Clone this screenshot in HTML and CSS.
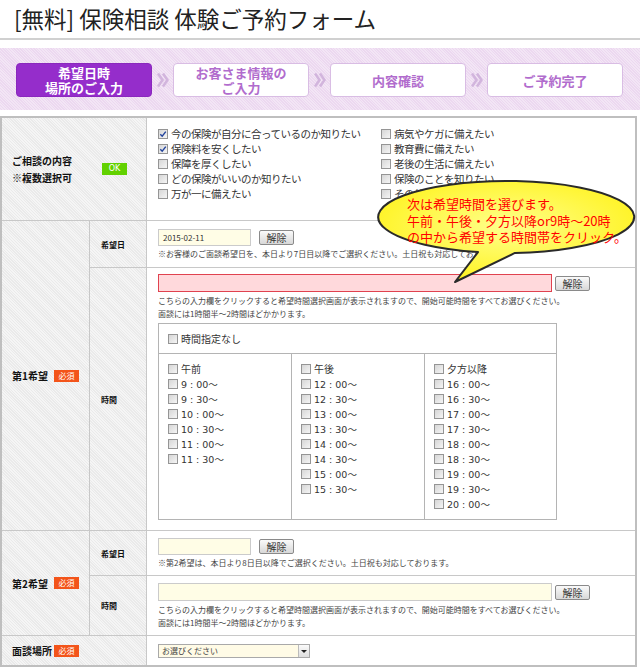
FILE: index.html
```html
<!DOCTYPE html>
<html lang="ja">
<head>
<meta charset="utf-8">
<title>保険相談 体験ご予約フォーム</title>
<link rel="stylesheet" href="styles.css">
</head>
<body>
<div class="page">
  <h1 class="title">[無料] 保険相談 体験ご予約フォーム</h1>

  <ol class="steps">
    <li class="step active">希望日時<br>場所のご入力</li>
    <li class="chev"><svg viewBox="0 0 12 16" width="12" height="16"><path d="M1 1.5 L5.5 8 L1 14.5 M6 1.5 L10.5 8 L6 14.5"/></svg></li>
    <li class="step">お客さま情報の<br>ご入力</li>
    <li class="chev"><svg viewBox="0 0 12 16" width="12" height="16"><path d="M1 1.5 L5.5 8 L1 14.5 M6 1.5 L10.5 8 L6 14.5"/></svg></li>
    <li class="step">内容確認</li>
    <li class="chev"><svg viewBox="0 0 12 16" width="12" height="16"><path d="M1 1.5 L5.5 8 L1 14.5 M6 1.5 L10.5 8 L6 14.5"/></svg></li>
    <li class="step">ご予約完了</li>
  </ol>

  <table class="form">
    <colgroup><col class="c1"><col class="c2"><col class="c3"></colgroup>
    <tbody>
      <tr class="r-consult">
        <th colspan="2" class="lab">
          <div class="lw"><span class="lt">ご相談の内容<br>※複数選択可</span><span class="badge ok">OK</span></div>
        </th>
        <td class="val v-consult">
          <div class="checks">
            <ul class="cl">
              <li><span class="cb"><svg viewBox="0 0 8 8"><path d="M1.3 4.2 L3.2 6.2 L6.8 1.6"/></svg></span>今の保険が自分に合っているのか知りたい</li>
              <li><span class="cb"><svg viewBox="0 0 8 8"><path d="M1.3 4.2 L3.2 6.2 L6.8 1.6"/></svg></span>保険料を安くしたい</li>
              <li><span class="cb"></span>保障を厚くしたい</li>
              <li><span class="cb"></span>どの保険がいいのか知りたい</li>
              <li><span class="cb"></span>万が一に備えたい</li>
            </ul>
            <ul class="cl">
              <li><span class="cb"></span>病気やケガに備えたい</li>
              <li><span class="cb"></span>教育費に備えたい</li>
              <li><span class="cb"></span>老後の生活に備えたい</li>
              <li><span class="cb"></span>保険のことを知りたい</li>
              <li><span class="cb"></span>その他</li>
            </ul>
          </div>
        </td>
      </tr>

      <tr class="r-d1">
        <th rowspan="2" class="lab">
          <div class="lw"><span class="lt">第1希望</span><span class="badge req">必須</span></div>
        </th>
        <th class="sub">希望日</th>
        <td class="val v-date">
          <div class="line"><span class="inp date">2015-02-11</span><span class="btn">解除</span></div>
          <p class="note">※お客様のご面談希望日を、本日より7日目以降でご選択ください。土日祝も対応しております。</p>
        </td>
      </tr>

      <tr class="r-t1">
        <th class="sub">時間</th>
        <td class="val v-time">
          <div class="line"><span class="inp time err"></span><span class="btn near">解除</span></div>
          <p class="note2">こちらの入力欄をクリックすると希望時間選択画面が表示されますので、開始可能時間をすべてお選びください。<br>面談には1時間半～2時間ほどかかります。</p>
          <div class="timebox">
            <div class="tb-top"><span class="cb"></span><span class="jp">時間指定なし</span></div>
            <div class="tb-cols">
              <ul class="tl">
                <li><span class="cb"></span><span class="jp">午前</span></li>
                <li><span class="cb"></span>9 : 00～</li>
                <li><span class="cb"></span>9 : 30～</li>
                <li><span class="cb"></span>10 : 00～</li>
                <li><span class="cb"></span>10 : 30～</li>
                <li><span class="cb"></span>11 : 00～</li>
                <li><span class="cb"></span>11 : 30～</li>
              </ul>
              <ul class="tl">
                <li><span class="cb"></span><span class="jp">午後</span></li>
                <li><span class="cb"></span>12 : 00～</li>
                <li><span class="cb"></span>12 : 30～</li>
                <li><span class="cb"></span>13 : 00～</li>
                <li><span class="cb"></span>13 : 30～</li>
                <li><span class="cb"></span>14 : 00～</li>
                <li><span class="cb"></span>14 : 30～</li>
                <li><span class="cb"></span>15 : 00～</li>
                <li><span class="cb"></span>15 : 30～</li>
              </ul>
              <ul class="tl">
                <li><span class="cb"></span><span class="jp">夕方以降</span></li>
                <li><span class="cb"></span>16 : 00～</li>
                <li><span class="cb"></span>16 : 30～</li>
                <li><span class="cb"></span>17 : 00～</li>
                <li><span class="cb"></span>17 : 30～</li>
                <li><span class="cb"></span>18 : 00～</li>
                <li><span class="cb"></span>18 : 30～</li>
                <li><span class="cb"></span>19 : 00～</li>
                <li><span class="cb"></span>19 : 30～</li>
                <li><span class="cb"></span>20 : 00～</li>
              </ul>
            </div>
          </div>
        </td>
      </tr>

      <tr class="r-d2">
        <th rowspan="2" class="lab">
          <div class="lw"><span class="lt">第2希望</span><span class="badge req">必須</span></div>
        </th>
        <th class="sub">希望日</th>
        <td class="val v-d2">
          <div class="line"><span class="inp date"></span><span class="btn">解除</span></div>
          <p class="note">※第2希望は、本日より8日目以降でご選択ください。土日祝も対応しております。</p>
        </td>
      </tr>

      <tr class="r-t2">
        <th class="sub">時間</th>
        <td class="val v-t2">
          <div class="line"><span class="inp time"></span><span class="btn near">解除</span></div>
          <p class="note2">こちらの入力欄をクリックすると希望時間選択画面が表示されますので、開始可能時間をすべてお選びください。<br>面談には1時間半～2時間ほどかかります。</p>
        </td>
      </tr>

      <tr class="r-place">
        <th colspan="2" class="lab">
          <div class="lw"><span class="lt">面談場所</span><span class="badge req">必須</span></div>
        </th>
        <td class="val v-place">
          <div class="sel"><span class="txt">お選びください</span><span class="arr"></span></div>
        </td>
      </tr>
    </tbody>
  </table>

  <div class="callout">
    <svg width="264" height="110" viewBox="0 0 264 110">
      <defs>
        <radialGradient id="yg" cx="50%" cy="45%" r="60%">
          <stop offset="0" stop-color="#ffff8c"/>
          <stop offset="1" stop-color="#fff21a"/>
        </radialGradient>
      </defs>
      <path d="M139 75.9 A128 36 0 1 0 102 75.1 L79 105 Z" fill="url(#yg)" stroke="#2a2a2a" stroke-width="2" stroke-linejoin="round"/>
    </svg>
    <p>次は希望時間を選びます。<br>午前・午後・夕方以降or9時～20時<br>の中から希望する時間帯をクリック。</p>
  </div>
</div>
</body>
</html>
```

FILE: styles.css
```css
* { box-sizing: border-box; }
html, body { margin: 0; padding: 0; background: #fff; }
body { font-family: "Noto Sans CJK JP", "Noto Sans", sans-serif; color: #333; }

.page { position: relative; width: 640px; height: 670px; overflow: hidden; }

.title {
  margin: 0;
  height: 40px;
  padding: 6px 0 0 14px;
  font-size: 22.5px;
  line-height: 24px;
  font-weight: 400;
  color: #222;
  border-bottom: 2px solid #d0d0d0;
  white-space: nowrap;
}

.steps {
  list-style: none;
  margin: 8px 0 0;
  padding: 15px 16px 0;
  height: 62px;
  display: flex;
  align-items: flex-start;
  background: #ecd8f0 repeating-linear-gradient(45deg, rgba(255,255,255,.35) 0 1px, transparent 1px 2px);
}
.step {
  width: 136px;
  height: 34px;
  display: flex;
  align-items: center;
  justify-content: center;
  text-align: center;
  font-size: 13px;
  line-height: 15px;
  font-weight: 700;
  color: #b16ccd;
  background: #fff;
  border: 1px solid #d9bde4;
  border-radius: 4px;
}
.step.active { background: #952dcb; border-color: #8a28bd; color: #fff; }
.chev { width: 21px; height: 34px; display: flex; align-items: center; justify-content: center; }
.chev svg { fill: none; stroke: #d2b5dd; stroke-width: 2.6; }

.form {
  margin-top: 6px;
  width: 637px;
  border: 2px solid #bfbfbf;
  border-collapse: separate;
  border-spacing: 0;
  table-layout: fixed;
}
.c1 { width: 88px; }
.c2 { width: 57px; }
.c3 { width: 488px; }

.form th, .form td {
  padding: 0;
  border-right: 1px solid #c8c8c8;
  border-bottom: 1px solid #c8c8c8;
  font-weight: 400;
  text-align: left;
}
.form td.val { border-right: 0; vertical-align: top; padding-left: 11px; }
.form .r-place > th, .form .r-place > td { border-bottom: 0; }

.form .lab, .form .sub {
  vertical-align: middle;
  background: #efefef repeating-linear-gradient(45deg, #f5f5f5 0 1px, #eaeaea 1px 2px);
}

.r-consult { height: 103px; }
.r-d1 { height: 47px; }
.r-t1 { height: 263px; }
.r-d2 { height: 45px; }
.r-t2 { height: 60px; }
.r-place { height: 29px; }

.form td.v-consult { padding-top: 8px; }
.form td.v-date { padding-top: 8px; }
.form td.v-time { padding-top: 6px; }
.form td.v-d2 { padding-top: 7px; }
.form td.v-t2 { padding-top: 7px; }
.form td.v-place { padding-top: 8px; }

.lw { display: flex; align-items: center; padding-left: 10px; }
.lt { font-size: 10px; font-weight: 700; color: #111; line-height: 17px; min-width: 42px; white-space: nowrap; }
.badge { display: inline-block; width: 25px; height: 12px; font-size: 8px; line-height: 12px; text-align: center; color: #fff; }
.req { background: #f3541a; }
.ok { background: #62d100; margin-left: 30px; font-family: "DejaVu Sans", sans-serif; font-size: 8px; }
.form th.sub { padding-left: 11px; font-size: 8px; font-weight: 700; color: #111; }

.checks { display: grid; grid-template-columns: 223px auto; }
.cl { list-style: none; margin: 0; padding: 0; }
.cl li { display: flex; align-items: center; height: 15px; font-size: 10.5px; letter-spacing: -0.5px; white-space: nowrap; color: #333; }

.cb {
  flex: none;
  width: 10px;
  height: 10px;
  margin-right: 3px;
  border: 1px solid #959595;
  background: linear-gradient(135deg, #d6d6d6, #f5f5f5);
  display: inline-flex;
  align-items: center;
  justify-content: center;
}
.cb svg { width: 8px; height: 8px; fill: none; stroke: #22439c; stroke-width: 1.4; }

.line { display: flex; align-items: center; }
.inp {
  display: block;
  height: 17px;
  border: 1px solid #cbcbcb;
  background: #fffde6;
  padding: 0 4px;
  font-size: 8px;
  line-height: 15px;
  color: #333;
}
.inp.date { width: 93px; }
.inp.time { width: 394px; height: 18px; }
.inp.err { background: #ffd9dc; border-color: #e0424f; }

.btn {
  display: inline-block;
  margin-left: 8px;
  width: 35px;
  height: 15px;
  border: 1px solid #8a8a8a;
  border-radius: 2px;
  background: linear-gradient(#fafafa, #d8d8d8);
  font-size: 10px;
  line-height: 13px;
  text-align: center;
  color: #333;
}
.btn.near { margin-left: 3px; }

.note { margin: 2px 0 0; font-size: 8px; line-height: 12px; color: #444; white-space: nowrap; }
.note2 { margin: 2px 0 0; font-size: 8px; line-height: 13px; color: #444; white-space: nowrap; }

.timebox {
  width: 399px;
  height: 197px;
  margin-top: 3px;
  border: 1px solid #b4b4b4;
  display: flex;
  flex-direction: column;
}
.tb-top {
  height: 30px;
  flex: none;
  padding-left: 9px;
  border-bottom: 1px solid #b4b4b4;
  display: flex;
  align-items: center;
}
.jp { font-family: "Noto Sans CJK JP", sans-serif; font-size: 10px; color: #333; }
.tb-cols { flex: 1; display: grid; grid-template-columns: 133px 133px 1fr; }
.tl { list-style: none; margin: 0; padding: 7px 0 0 9px; border-right: 1px solid #b4b4b4; }
.tl:last-child { border-right: 0; }
.tl li {
  display: flex;
  align-items: center;
  height: 15px;
  font-family: "DejaVu Sans", "Noto Sans CJK JP", sans-serif;
  font-size: 9.5px;
  color: #333;
  white-space: nowrap;
}

.sel {
  width: 152px;
  height: 14px;
  border: 1px solid #a9a9a9;
  background: #fffbe6;
  display: flex;
  align-items: center;
  font-size: 8px;
  color: #444;
}
.sel .txt { flex: 1; padding-left: 3px; line-height: 12px; }
.sel .arr {
  width: 11px;
  height: 12px;
  border-left: 1px solid #bbb;
  background: linear-gradient(#fafafa, #dedede);
  display: flex;
  align-items: center;
  justify-content: center;
}
.sel .arr::after {
  content: "";
  border-left: 3px solid transparent;
  border-right: 3px solid transparent;
  border-top: 3px solid #222;
}

.callout { position: absolute; left: 376px; top: 177px; width: 264px; height: 110px; }
.callout svg { position: absolute; left: 0; top: 0; }
.callout p {
  position: absolute;
  left: 31px;
  top: 19px;
  margin: 0;
  font-size: 13px;
  line-height: 16.5px;
  color: #f00;
  white-space: nowrap;
}
```
